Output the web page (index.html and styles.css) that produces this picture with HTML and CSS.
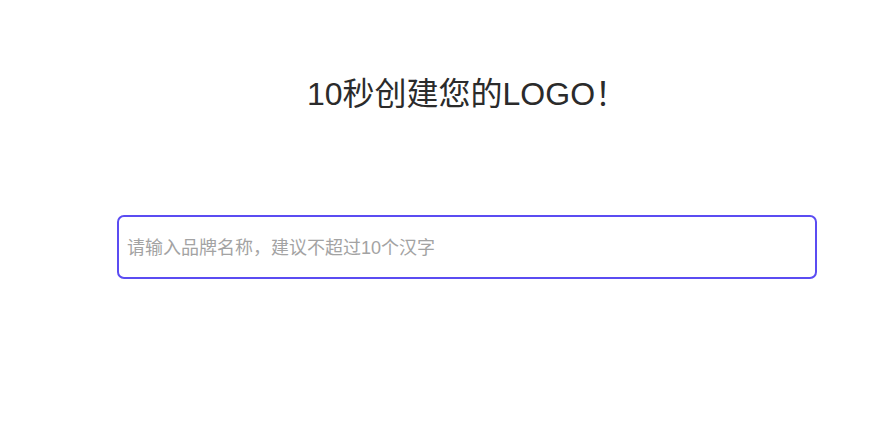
FILE: index.html
```html
<!DOCTYPE html>
<html lang="zh-CN">
<head>
<meta charset="utf-8">
<title>10秒创建您的LOGO！</title>
<link rel="stylesheet" href="styles.css">
</head>
<body>
<main class="page">
  <h1 class="title">10秒创建您的LOGO！</h1>
  <div class="field">
    <input class="brand-input" type="text" placeholder="请输入品牌名称，建议不超过10个汉字">
  </div>
</main>
</body>
</html>
```

FILE: styles.css
```css
html, body {
  margin: 0;
  padding: 0;
  background: #ffffff;
}

.page {
  padding-left: 49px;
  display: flex;
  flex-direction: column;
  align-items: center;
  font-family: "Liberation Sans", "Noto Sans CJK SC", sans-serif;
}

.title {
  margin: 74px 0 0 0;
  font-size: 32px;
  line-height: 40px;
  font-weight: normal;
  color: #2b2b2b;
}

.field {
  margin-top: 101px;
  width: 700px;
}

.brand-input {
  box-sizing: border-box;
  width: 700px;
  height: 64px;
  margin: 0;
  padding: 3px 8px 0 8px;
  border: 2px solid #5b4cf2;
  border-radius: 7px;
  outline: none;
  font-family: "Liberation Sans", "Noto Sans CJK SC", sans-serif;
  font-size: 18px;
  color: #333333;
  background: #ffffff;
}

.brand-input::placeholder {
  color: #a3a3a3;
  opacity: 1;
}
```
